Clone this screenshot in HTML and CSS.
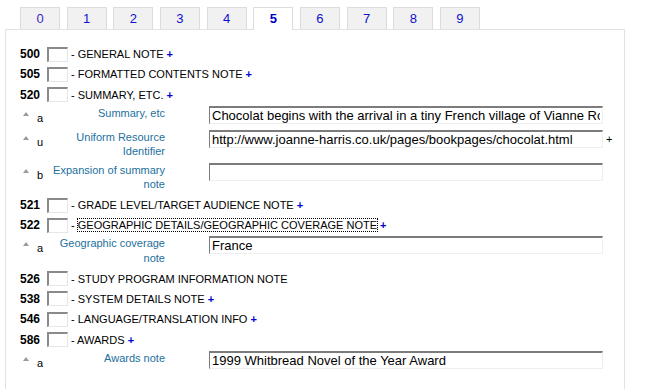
FILE: index.html
```html
<!DOCTYPE html>
<html>
	<head>
		<meta charset="utf-8">
		<title>MARC 5XX</title>
		<link rel="stylesheet" href="styles.css">
	</head>
	<body>
		<ul class="tabs">
			<li><a class="visited" href="#">0</a></li>
			<li><a href="#">1</a></li>
			<li><a href="#">2</a></li>
			<li><a href="#">3</a></li>
			<li><a href="#">4</a></li>
			<li class="active"><a href="#">5</a></li>
			<li><a href="#">6</a></li>
			<li><a href="#">7</a></li>
			<li><a href="#">8</a></li>
			<li><a href="#">9</a></li>
		</ul>
		<div class="panel">
			<div class="tag">
				<span class="tagnum">500</span><input class="ind" type="text"><span class="tagname">- GENERAL NOTE <a class="add" href="#">+</a></span>
			</div>
			<div class="tag">
				<span class="tagnum">505</span><input class="ind" type="text"><span class="tagname">- FORMATTED CONTENTS NOTE <a class="add" href="#">+</a></span>
			</div>
			<div class="tag">
				<span class="tagnum">520</span><input class="ind" type="text"><span class="tagname">- SUMMARY, ETC. <a class="add" href="#">+</a></span>
			</div>
			<div class="subfield">
				<span class="arrow"></span><span class="code">a</span>
				<label class="sflabel">Summary, etc</label>
				<input class="sfinput" type="text" value="Chocolat begins with the arrival in a tiny French village of Vianne Rocher and her daughter">
			</div>
			<div class="subfield">
				<span class="arrow"></span><span class="code">u</span>
				<label class="sflabel">Uniform Resource Identifier</label>
				<input class="sfinput" type="text" value="http://www.joanne-harris.co.uk/pages/bookpages/chocolat.html">
				<span class="repeat">+</span>
			</div>
			<div class="subfield">
				<span class="arrow"></span><span class="code">b</span>
				<label class="sflabel">Expansion of summary note</label>
				<input class="sfinput" type="text" value="">
			</div>
			<div class="tag">
				<span class="tagnum">521</span><input class="ind" type="text"><span class="tagname">- GRADE LEVEL/TARGET AUDIENCE NOTE <a class="add" href="#">+</a></span>
			</div>
			<div class="tag">
				<span class="tagnum">522</span><input class="ind" type="text"><span class="tagname">- <span class="focus">GEOGRAPHIC DETAILS/GEOGRAPHIC COVERAGE NOTE</span> <a class="add" href="#">+</a></span>
			</div>
			<div class="subfield">
				<span class="arrow"></span><span class="code">a</span>
				<label class="sflabel">Geographic coverage note</label>
				<input class="sfinput" type="text" value="France">
			</div>
			<div class="tag">
				<span class="tagnum">526</span><input class="ind" type="text"><span class="tagname">- STUDY PROGRAM INFORMATION NOTE</span>
			</div>
			<div class="tag">
				<span class="tagnum">538</span><input class="ind" type="text"><span class="tagname">- SYSTEM DETAILS NOTE <a class="add" href="#">+</a></span>
			</div>
			<div class="tag">
				<span class="tagnum">546</span><input class="ind" type="text"><span class="tagname">- LANGUAGE/TRANSLATION INFO <a class="add" href="#">+</a></span>
			</div>
			<div class="tag">
				<span class="tagnum">586</span><input class="ind" type="text"><span class="tagname">- AWARDS <a class="add" href="#">+</a></span>
			</div>
			<div class="subfield">
				<span class="arrow"></span><span class="code">a</span>
				<label class="sflabel">Awards note</label>
				<input class="sfinput" type="text" value="1999 Whitbread Novel of the Year Award">
			</div>
		</div>
	</body>
</html>
```

FILE: styles.css
```css
*{
	margin: 0;
	padding: 0;
	box-sizing: border-box;
}
html,body{
	overflow: hidden;
}
body{
	padding: 7px 0 0 5px;
	background-color: #fff;
	font-family: "Liberation Sans", Arial, sans-serif;
	font-size: 11px;
	color: #000;
}
ul{
	list-style: none;
}
a{
	text-decoration: none;
}

/* tabs */
.tabs{
	display: flex;
	align-items: flex-start;
	gap: 6.67px;
	height: 22px;
	padding-left: 15px;
}
.tabs li{
	width: 40px;
	height: 22px;
	border: 1px solid #dcdcdc;
	border-bottom: none;
	background-color: #f1f1f1;
}
.tabs a{
	display: block;
	font-size: 13px;
	line-height: 21px;
	text-align: center;
	color: #1010d0;
}
.tabs a.visited{
	color: #3a28c4;
}
.tabs .active{
	position: relative;
	z-index: 1;
	height: 23px;
	background-color: #fff;
}
.tabs .active a{
	font-weight: bold;
	color: #0000c0;
}

/* panel */
.panel{
	width: 620px;
	height: 360px;
	border: 1px solid #e2e2e2;
	border-bottom: none;
	padding: 14px 0 0 14px;
}
.tag{
	display: flex;
	align-items: center;
	height: 20.3px;
}
.tagnum{
	width: 27px;
	font-size: 12px;
	font-weight: bold;
}
.ind{
	width: 21px;
	height: 15px;
	margin-right: 3px;
	border-style: solid;
	border-width: 2px 1px 1px 2px;
	border-color: #8a8a8a #e6e6e6 #e6e6e6 #8a8a8a;
	background-color: #fff;
}
.add{
	font-weight: bold;
	color: #0000d0;
}
.focus{
	outline: 1px dotted #000;
}

/* subfields */
.subfield{
	display: flex;
	align-items: flex-start;
	padding: 1px 0 3px;
}
.arrow{
	width: 0;
	height: 0;
	margin: 6px 0 0 3px;
	border-left: 3.5px solid transparent;
	border-right: 3.5px solid transparent;
	border-bottom: 4px solid #9a9a9a;
}
.code{
	width: 21px;
	padding-left: 8px;
	margin-top: 5px;
	line-height: 15px;
}
.sflabel{
	width: 115px;
	line-height: 14.5px;
	text-align: right;
	color: #23709e;
}
.sfinput{
	width: 394px;
	height: 18px;
	margin-left: 44px;
	padding: 0 2px;
	border-style: solid;
	border-width: 2px 1px 1px 1px;
	border-color: #7c7c7c #efefef #efefef #7c7c7c;
	background-color: #fff;
	font-family: "Liberation Sans", Arial, sans-serif;
	font-size: 13px;
	color: #000;
	outline: none;
}
.repeat{
	margin: 2px 0 0 3px;
	line-height: 15px;
}
```
